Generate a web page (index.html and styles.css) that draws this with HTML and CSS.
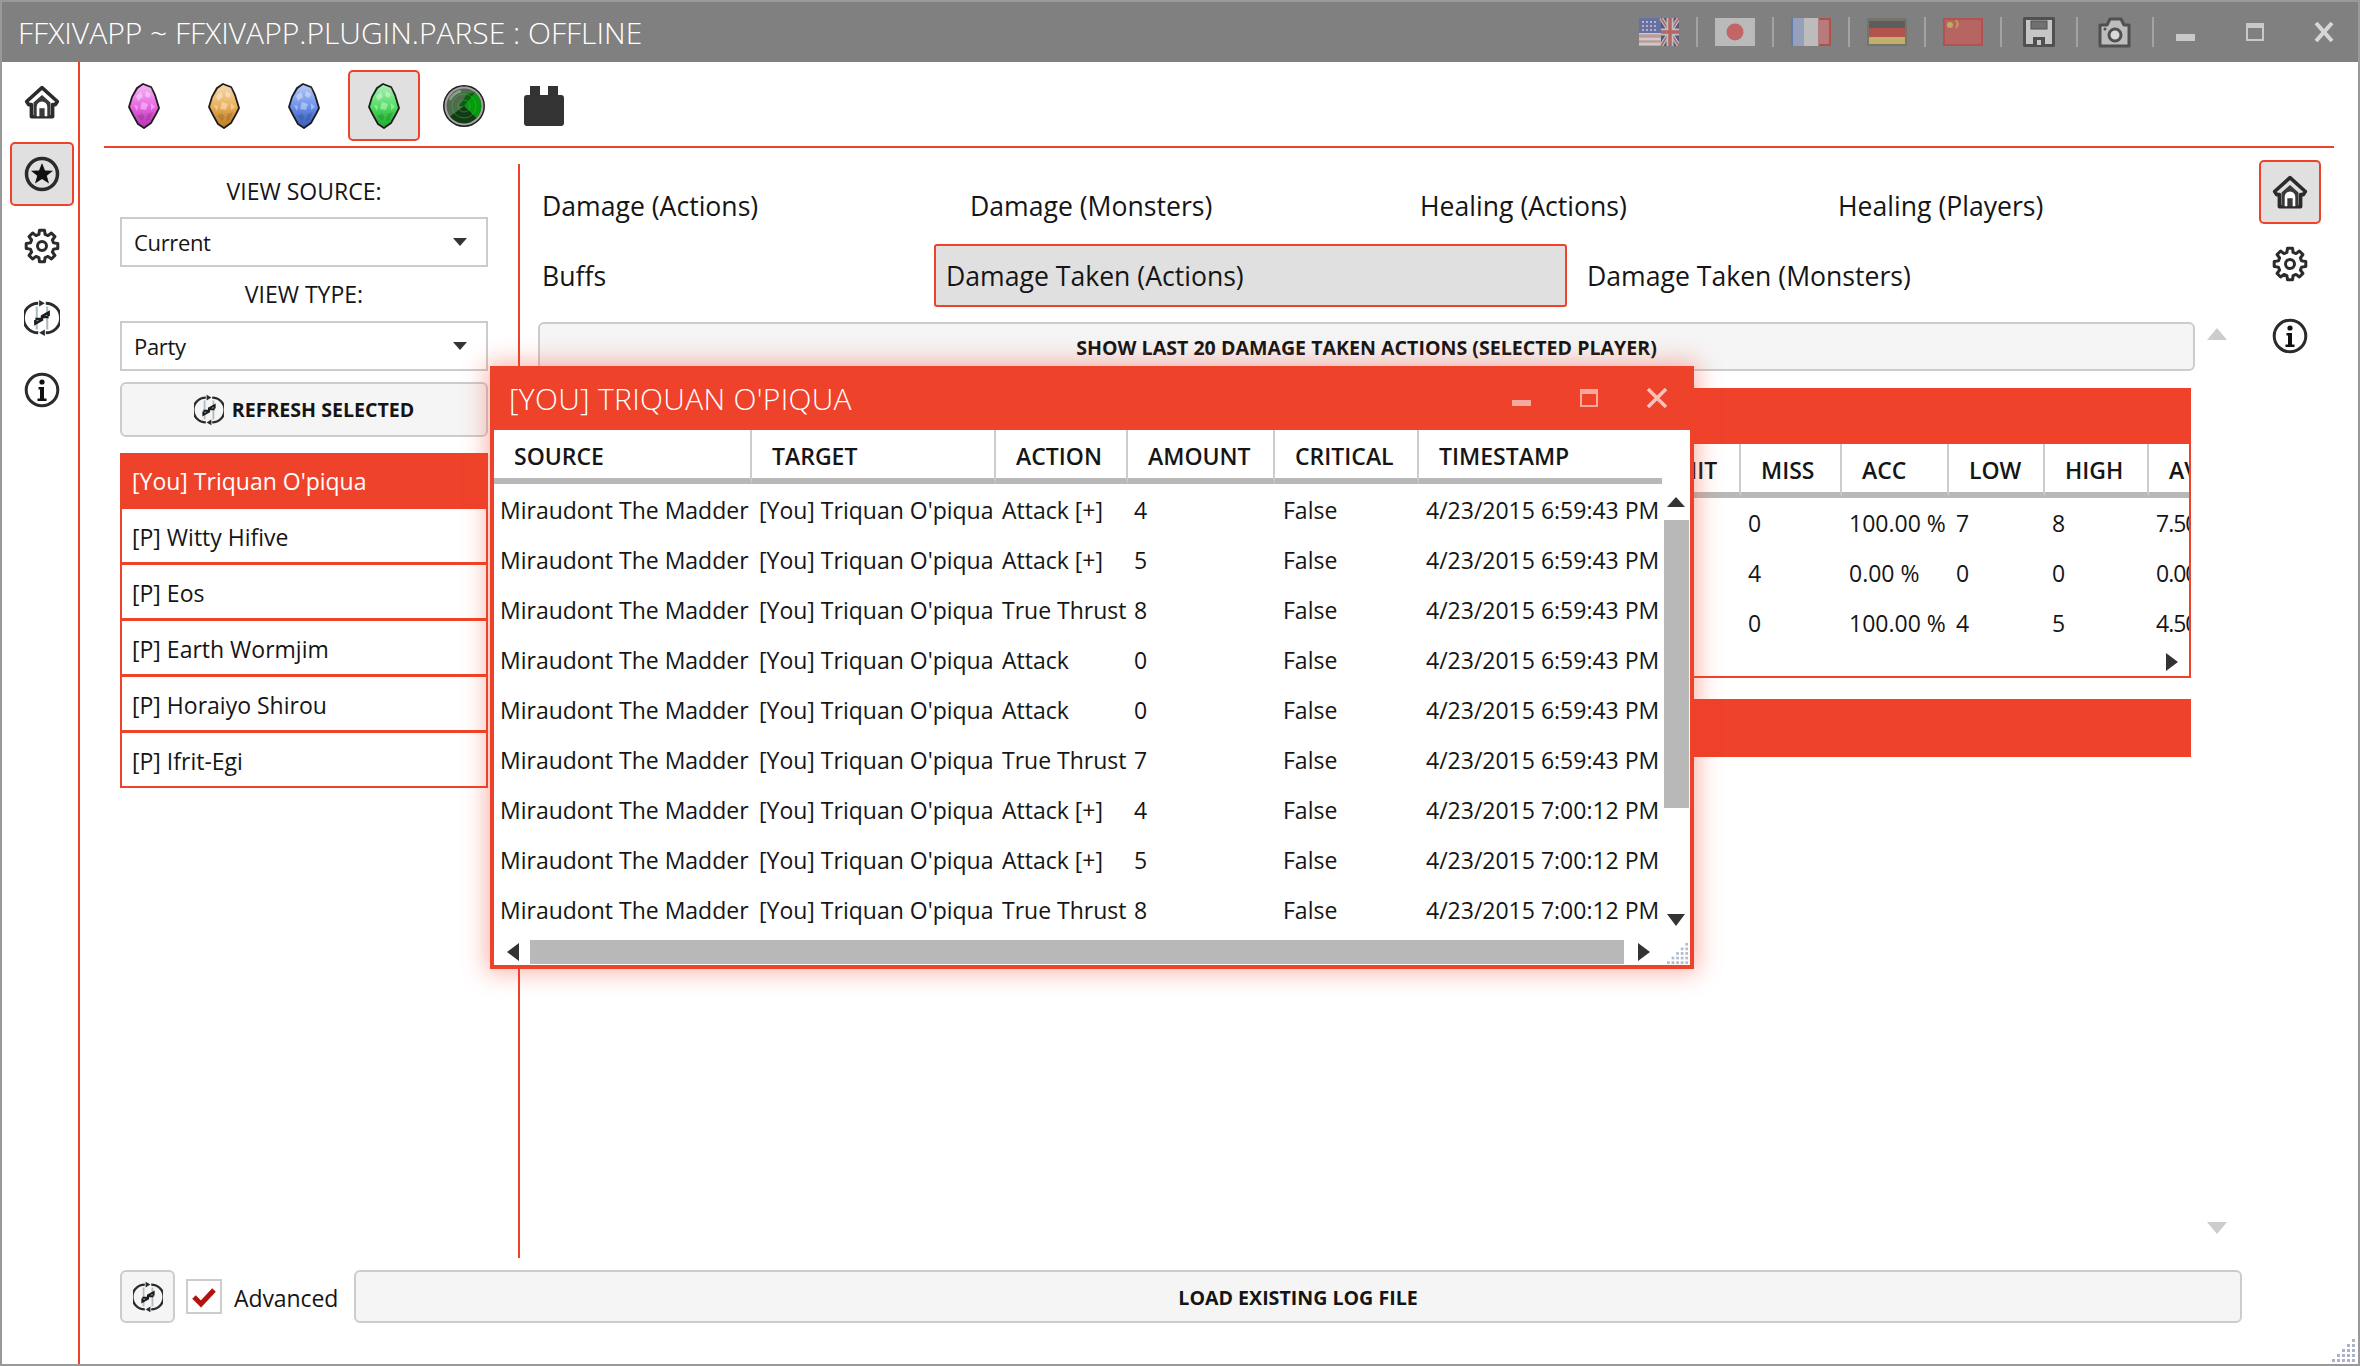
FILE: index.html
```html
<!DOCTYPE html>
<html lang="en">
<head>
<meta charset="utf-8">
<title>FFXIVAPP</title>
<link rel="stylesheet" href="styles.css">
</head>
<body>
<svg class="defs" width="0" height="0" aria-hidden="true">
  <defs>
    <linearGradient id="gem-shade" x1="0" y1="0" x2="0" y2="1">
      <stop offset="0" stop-color="#fff" stop-opacity=".62"/>
      <stop offset=".5" stop-color="#fff" stop-opacity=".22"/>
      <stop offset="1" stop-color="#000" stop-opacity=".16"/>
    </linearGradient>
    <symbol id="i-home" viewBox="0 0 34 33">
      <path d="M17 3 L2.500 16 L4.500 19 H7 V30.500 H27 V19 H29.500 L31.500 16 Z" fill="none" stroke="#2b2b2b" stroke-width="3.400" stroke-linejoin="round"/>
      <path d="M9 17 L17 10 L25 17 V30 H9 Z" fill="#3a3a3a"/>
      <path d="M12 30 V21 A5 5 0 0 1 22 21 V30 H19.500 V22.500 H14.500 V30 Z" fill="#fff"/>
    </symbol>
    <symbol id="i-star" viewBox="-18 -18 36 36">
      <circle r="15.500" fill="none" stroke="#2b2b2b" stroke-width="3.500"/>
      <path d="M0 -11 L3 -3.500 L11 -3.200 L4.800 1.800 L7 9.500 L0 5.100 L-7 9.500 L-4.800 1.800 L-11 -3.200 L-3 -3.500 Z" fill="#111"/>
    </symbol>
    <symbol id="i-gear" viewBox="-18 -18 36 36">
      <path d="M11.590 -3.110 L15.800 -2.500 L15.800 2.500 L11.590 3.110 L10.390 6 L12.940 9.400 L9.400 12.940 L6 10.390 L3.110 11.590 L2.500 15.800 L-2.500 15.800 L-3.110 11.590 L-6 10.390 L-9.400 12.940 L-12.940 9.400 L-10.390 6 L-11.590 3.110 L-15.800 2.500 L-15.800 -2.500 L-11.590 -3.110 L-10.390 -6 L-12.940 -9.400 L-9.400 -12.940 L-6 -10.390 L-3.110 -11.590 L-2.500 -15.800 L2.500 -15.800 L3.110 -11.590 L6 -10.390 L9.400 -12.940 L12.940 -9.400 L10.390 -6 Z" fill="none" stroke="#2b2b2b" stroke-width="3" stroke-linejoin="round"/>
      <circle r="4.500" fill="none" stroke="#2b2b2b" stroke-width="3"/>
    </symbol>
    <symbol id="i-refresh" viewBox="-18 -20 36 40">
      <path d="M-4 -15.500 A15.500 15.500 0 0 0 -4 15.500 M4 -15.500 A15.500 15.500 0 0 1 4 15.500" fill="none" stroke="#2b2b2b" stroke-width="3"/>
      <path d="M-3 -19 L3 -15.500 L-3 -12 Z M3 19 L-3 15.500 L3 12 Z" fill="#2b2b2b"/>
      <path d="M-5.500 -12 V12 M5.500 -12 V12" stroke="#a9bcc4" stroke-width="2.200"/>
      <path d="M-7 1 H0 V-2 L7 -6 V-2 M7 -1 H0 V2 L-7 6 V2" fill="none" stroke="#1c1c1c" stroke-width="2.600"/>
    </symbol>
    <symbol id="i-info" viewBox="-18 -18 36 36">
      <circle r="15.800" fill="none" stroke="#2b2b2b" stroke-width="3"/>
      <circle cy="-8" r="2.600" fill="#111"/>
      <path d="M-3.500 -3 H2 V8.500 H4.500 V11 H-4.500 V8.500 H-2 V-.500 H-3.500 Z" fill="#111"/>
    </symbol>
    <symbol id="i-gem" viewBox="0 0 32 46">
      <path d="M15 1 L23 4 L27 12 L31 25 L28 31 L23 40 L16 45 L10 41 L5 32 L1 24 L4 14 L9 5 Z" fill="currentColor" stroke="#1c1c1c" stroke-width="1.800" stroke-linejoin="round"/>
      <path d="M15 2 L23 5 L26 12 L30 25 L27 31 L22 40 L16 44 L11 41 L6 32 L2 24 L5 14 L10 6 Z" fill="url(#gem-shade)"/>
      <path d="M8 13 L13 9 L15 14 L10 18 Z M18 8 L23 11 L21 15 L17 13 Z M14 19 L20 21 L18 27 L12 26 Z M23 20 L27 24 L23 27 Z M6 22 L10 23 L9 28 Z" fill="#fff" opacity=".38"/>
      <path d="M9 33 L14 30 L17 34 L14 38 Z M19 31 L25 29 L22 37 L18 38 Z" fill="#000" opacity=".12"/>
    </symbol>
  </defs>
</svg>

<div class="window">
  <header class="titlebar">
    <h1 class="app-title">FFXIVAPP ~ FFXIVAPP.PLUGIN.PARSE : OFFLINE</h1>
    <div class="title-tools">
      <svg class="flag" viewBox="0 0 40 28"><rect width="22" height="28" fill="#d9a5a5"/><path d="M0 3h22M0 9h22M0 15h22M0 21h22M0 26h22" stroke="#efe9e9" stroke-width="2.500"/><rect width="22" height="15" fill="#5d6cb0"/><path d="M3 4h16M3 8h16M3 12h16" stroke="#c6cce6" stroke-width="2" stroke-dasharray="2 2"/><rect x="22" width="18" height="28" fill="#3f4a7c"/><path d="M22 0L40 28M40 0L22 28" stroke="#d9d9d9" stroke-width="4"/><path d="M22 0L40 28M40 0L22 28" stroke="#c25a5a" stroke-width="1.500"/><path d="M31 0v28M22 14h18" stroke="#d9d9d9" stroke-width="7"/><path d="M31 0v28M22 14h18" stroke="#cc5b5b" stroke-width="3.500"/></svg>
      <i class="sep"></i>
      <svg class="flag" viewBox="0 0 40 28"><rect width="40" height="28" fill="#d3d3d3"/><circle cx="20" cy="14" r="8.500" fill="#de5a5a"/></svg>
      <i class="sep"></i>
      <svg class="flag" viewBox="0 0 40 28"><rect width="40" height="28" fill="#d6d6d6"/><rect width="13" height="28" fill="#9fb0d0"/><rect x="27" width="13" height="28" fill="#cf7b78"/><rect width="2" height="28" fill="#5b78bd"/><path d="M28 1h11v26H28" fill="none" stroke="#c73c38" stroke-width="2"/></svg>
      <i class="sep"></i>
      <svg class="flag" viewBox="0 0 40 28"><rect width="40" height="28" fill="#6f6f5e"/><rect x="2" y="3" width="36" height="8" fill="#4f4f4f"/><rect x="2" y="10" width="36" height="9" fill="#c9403a"/><rect x="2" y="19" width="36" height="7" fill="#ddc564"/></svg>
      <i class="sep"></i>
      <svg class="flag" viewBox="0 0 40 28"><rect width="40" height="28" fill="#c63f3c"/><rect x="2" y="2" width="36" height="24" fill="#cf5a56"/><circle cx="7" cy="7" r="3" fill="#d8bf55"/><path d="M13 2l2 4-2 4" fill="none" stroke="#d6a44f" stroke-width="2"/></svg>
      <i class="sep"></i>
      <svg class="tool-floppy" viewBox="0 0 32 30"><path d="M1.500 1.500H30.500V28.500H1.500Z" fill="#c6c6c6" stroke="#505050" stroke-width="3" stroke-linejoin="round"/><rect x="8" y="4" width="16" height="8" fill="#707070" stroke="#505050"/><rect x="10" y="20" width="12" height="9" fill="#505050"/><rect x="14" y="23" width="4" height="5" fill="#c6c6c6"/></svg>
      <i class="sep"></i>
      <svg class="tool-camera" viewBox="0 0 35 31"><path d="M3 8H10L13 2H24L27 8H32V29H3Z" fill="#bdbdbd" stroke="#505050" stroke-width="3" stroke-linejoin="round"/><circle cx="18" cy="18" r="6" fill="#d8d8d8" stroke="#505050" stroke-width="3"/><circle cx="8" cy="12" r="1.500" fill="#505050"/></svg>
      <i class="sep"></i>
      <div class="win-controls">
        <span class="win-btn win-min"><svg width="19" height="7"><rect width="19" height="7" fill="#c9c9c9"/></svg></span>
        <span class="win-btn"><svg width="18" height="18"><rect x="1" y="1" width="16" height="16" fill="none" stroke="#c9c9c9" stroke-width="2"/><rect width="18" height="5" fill="#c9c9c9"/></svg></span>
        <span class="win-btn"><svg width="20" height="20"><path d="M2 1L18 19M18 1L2 19" stroke="#d6d6d6" stroke-width="4"/></svg></span>
      </div>
    </div>
  </header>

  <div class="main">
    <nav class="rail">
      <span class="rail-slot"><svg class="nav-icon"><use href="#i-home"/></svg></span>
      <span class="rail-slot"><span class="icon-btn active"><svg class="nav-icon"><use href="#i-star"/></svg></span></span>
      <span class="rail-slot"><svg class="nav-icon"><use href="#i-gear"/></svg></span>
      <span class="rail-slot"><svg class="nav-icon"><use href="#i-refresh"/></svg></span>
      <span class="rail-slot"><svg class="nav-icon"><use href="#i-info"/></svg></span>
    </nav>

    <div class="content">
      <div class="toolbar">
        <span class="tool-slot"><svg class="gem gem-pink"><use href="#i-gem"/></svg></span>
        <span class="tool-slot"><svg class="gem gem-orange"><use href="#i-gem"/></svg></span>
        <span class="tool-slot"><svg class="gem gem-blue"><use href="#i-gem"/></svg></span>
        <span class="tool-slot active"><svg class="gem gem-green"><use href="#i-gem"/></svg></span>
        <span class="tool-slot">
          <svg class="radar" viewBox="0 0 44 46">
            <circle cx="22" cy="23" r="21" fill="#1e1e1e"/>
            <circle cx="22" cy="23" r="19.500" fill="#a5a5a5"/>
            <circle cx="22" cy="23" r="17.500" fill="#52684f"/>
            <path d="M22 23L33 9.500A17.500 17.500 0 0 1 34.500 35Z" fill="#079a0d"/>
            <path d="M22 23L34.500 35A17.500 17.500 0 0 1 8 33.500Z" fill="#123a14"/>
            <path d="M22 23L33 9.500 25 11 17 23Z" fill="#0a5f10"/>
            <circle cx="22" cy="23" r="12" fill="none" stroke="#2fc838" stroke-width=".8" opacity=".6"/>
            <circle cx="22" cy="23" r="6" fill="none" stroke="#2fc838" stroke-width=".8" opacity=".6"/>
            <path d="M8 17A16 16 0 0 1 19 8" stroke="#8c9c8c" stroke-width="2.500" fill="none"/>
          </svg>
        </span>
        <span class="tool-slot">
          <svg class="plugin" viewBox="0 0 40 40"><rect x="6" y="0" width="10" height="15" fill="#333"/><rect x="24" y="0" width="10" height="15" fill="#333"/><rect y="9" width="40" height="31" rx="3" fill="#333"/></svg>
        </span>
      </div>

      <div class="panels">
        <aside class="left">
          <div class="field-label">VIEW SOURCE:</div>
          <div class="combo"><span>Current</span><i class="combo-arrow"></i></div>
          <div class="field-label field-label-2">VIEW TYPE:</div>
          <div class="combo"><span>Party</span><i class="combo-arrow"></i></div>
          <div class="btn btn-refresh"><svg class="btn-icon"><use href="#i-refresh"/></svg><span>REFRESH SELECTED</span></div>
          <ul class="players">
            <li class="selected">[You] Triquan O'piqua</li>
            <li>[P] Witty Hifive</li>
            <li>[P] Eos</li>
            <li>[P] Earth Wormjim</li>
            <li>[P] Horaiyo Shirou</li>
            <li>[P] Ifrit-Egi</li>
          </ul>
        </aside>

        <section class="center">
          <div class="tabs tabs-1">
            <span class="tab">Damage (Actions)</span>
            <span class="tab">Damage (Monsters)</span>
            <span class="tab">Healing (Actions)</span>
            <span class="tab">Healing (Players)</span>
          </div>
          <div class="tabs tabs-2">
            <span class="tab">Buffs</span>
            <span class="tab selected">Damage Taken (Actions)</span>
            <span class="tab tab-last">Damage Taken (Monsters)</span>
          </div>
          <div class="scroll-row">
            <div class="scroll-main">
              <div class="btn btn-wide">SHOW LAST 20 DAMAGE TAKEN ACTIONS (SELECTED PLAYER)</div>
              <div class="panel-head"></div>
              <div class="panel-body">
                <table class="grid stats">
                  <colgroup><col class="sc-name"><col class="sc-hit"><col class="sc-miss"><col class="sc-acc"><col class="sc-low"><col class="sc-high"><col class="sc-avg"></colgroup>
                  <thead><tr><th></th><th class="th-hit">HIT</th><th>MISS</th><th>ACC</th><th>LOW</th><th>HIGH</th><th>AVG</th></tr></thead>
                  <tbody>
                    <tr><td></td><td></td><td>0</td><td>100.00 %</td><td>7</td><td>8</td><td>7.50</td></tr>
                    <tr><td></td><td></td><td>4</td><td>0.00 %</td><td>0</td><td>0</td><td>0.00</td></tr>
                    <tr><td></td><td></td><td>0</td><td>100.00 %</td><td>4</td><td>5</td><td>4.50</td></tr>
                  </tbody>
                </table>
                <div class="stats-scroll"><i class="arrow arrow-right"></i></div>
              </div>
              <div class="panel-head panel-head-2"></div>
            </div>
            <div class="page-scroll">
              <i class="page-arrow page-arrow-up"></i>
              <i class="page-arrow page-arrow-down"></i>
            </div>
          </div>
        </section>

        <aside class="side">
          <span class="side-slot"><span class="icon-btn active side-active"><svg class="side-icon"><use href="#i-home"/></svg></span></span>
          <span class="side-slot"><svg class="side-icon"><use href="#i-gear"/></svg></span>
          <span class="side-slot"><svg class="side-icon"><use href="#i-info"/></svg></span>
        </aside>
      </div>

      <footer class="bottom">
        <div class="btn btn-square"><svg class="btn-icon"><use href="#i-refresh"/></svg></div>
        <span class="check"><svg width="26" height="22" viewBox="0 0 26 22"><path d="M3 11L10 18L23 4" fill="none" stroke="#b3130e" stroke-width="5"/></svg></span>
        <span class="check-label">Advanced</span>
        <div class="btn btn-load">LOAD EXISTING LOG FILE</div>
      </footer>
    </div>
  </div>

  <svg class="grip grip-window" width="24" height="24" viewBox="0 0 24 24"><g fill="#a9b4cc"><rect x="20" y="1" width="3" height="3"/><rect x="15" y="6" width="3" height="3"/><rect x="20" y="6" width="3" height="3"/><rect x="10" y="11" width="3" height="3"/><rect x="15" y="11" width="3" height="3"/><rect x="20" y="11" width="3" height="3"/><rect x="5" y="16" width="3" height="3"/><rect x="10" y="16" width="3" height="3"/><rect x="15" y="16" width="3" height="3"/><rect x="20" y="16" width="3" height="3"/><rect x="0" y="21" width="3" height="3"/><rect x="5" y="21" width="3" height="3"/><rect x="10" y="21" width="3" height="3"/><rect x="15" y="21" width="3" height="3"/><rect x="20" y="21" width="3" height="3"/></g></svg>

  <div class="popup">
    <div class="popup-title">
      <span class="popup-name">[YOU] TRIQUAN O'PIQUA</span>
      <div class="popup-controls">
        <span class="pop-btn pop-min"><svg width="19" height="6"><rect width="19" height="6" fill="#f7a99e"/></svg></span>
        <span class="pop-btn"><svg width="18" height="18"><rect x="1" y="1" width="16" height="16" fill="none" stroke="#f7a99e" stroke-width="2"/><rect width="18" height="5" fill="#f7a99e"/></svg></span>
        <span class="pop-btn"><svg width="22" height="20"><path d="M2 1L20 19M20 1L2 19" stroke="#f9c3bb" stroke-width="3.500"/></svg></span>
      </div>
    </div>
    <div class="popup-body">
      <table class="grid log">
        <colgroup><col class="lc-source"><col class="lc-target"><col class="lc-action"><col class="lc-amount"><col class="lc-critical"><col class="lc-time"></colgroup>
        <thead><tr><th>SOURCE</th><th>TARGET</th><th>ACTION</th><th>AMOUNT</th><th>CRITICAL</th><th>TIMESTAMP</th></tr></thead>
        <tbody>
          <tr><td>Miraudont The Madder</td><td>[You] Triquan O'piqua</td><td>Attack [+]</td><td>4</td><td>False</td><td>4/23/2015 6:59:43 PM</td></tr>
          <tr><td>Miraudont The Madder</td><td>[You] Triquan O'piqua</td><td>Attack [+]</td><td>5</td><td>False</td><td>4/23/2015 6:59:43 PM</td></tr>
          <tr><td>Miraudont The Madder</td><td>[You] Triquan O'piqua</td><td>True Thrust</td><td>8</td><td>False</td><td>4/23/2015 6:59:43 PM</td></tr>
          <tr><td>Miraudont The Madder</td><td>[You] Triquan O'piqua</td><td>Attack</td><td>0</td><td>False</td><td>4/23/2015 6:59:43 PM</td></tr>
          <tr><td>Miraudont The Madder</td><td>[You] Triquan O'piqua</td><td>Attack</td><td>0</td><td>False</td><td>4/23/2015 6:59:43 PM</td></tr>
          <tr><td>Miraudont The Madder</td><td>[You] Triquan O'piqua</td><td>True Thrust</td><td>7</td><td>False</td><td>4/23/2015 6:59:43 PM</td></tr>
          <tr><td>Miraudont The Madder</td><td>[You] Triquan O'piqua</td><td>Attack [+]</td><td>4</td><td>False</td><td>4/23/2015 7:00:12 PM</td></tr>
          <tr><td>Miraudont The Madder</td><td>[You] Triquan O'piqua</td><td>Attack [+]</td><td>5</td><td>False</td><td>4/23/2015 7:00:12 PM</td></tr>
          <tr><td>Miraudont The Madder</td><td>[You] Triquan O'piqua</td><td>True Thrust</td><td>8</td><td>False</td><td>4/23/2015 7:00:12 PM</td></tr>
        </tbody>
      </table>
      <div class="vscroll">
        <i class="arrow arrow-up"></i>
        <div class="vthumb"></div>
        <i class="arrow arrow-down"></i>
      </div>
    </div>
    <div class="hscroll">
      <i class="arrow arrow-left"></i>
      <div class="hthumb"></div>
      <i class="arrow arrow-right"></i>
    </div>
    <svg class="grip grip-popup" width="22" height="22" viewBox="0 0 24 24"><g fill="#b4bccf"><rect x="20" y="1" width="3" height="3"/><rect x="15" y="6" width="3" height="3"/><rect x="20" y="6" width="3" height="3"/><rect x="10" y="11" width="3" height="3"/><rect x="15" y="11" width="3" height="3"/><rect x="20" y="11" width="3" height="3"/><rect x="5" y="16" width="3" height="3"/><rect x="10" y="16" width="3" height="3"/><rect x="15" y="16" width="3" height="3"/><rect x="20" y="16" width="3" height="3"/><rect x="0" y="21" width="3" height="3"/><rect x="5" y="21" width="3" height="3"/><rect x="10" y="21" width="3" height="3"/><rect x="15" y="21" width="3" height="3"/><rect x="20" y="21" width="3" height="3"/></g></svg>
  </div>
</div>
</body>
</html>
```

FILE: styles.css
```css
* { box-sizing: border-box; }
html, body { margin: 0; padding: 0; background: #fff; }
body { font-family: "Open Sans", "Noto Sans", sans-serif; color: #151515; font-size: 23px; }
.defs { position: absolute; }
i { display: block; }

.window {
  position: relative;
  width: 2360px;
  height: 1366px;
  display: flex;
  flex-direction: column;
  border: 2px solid #999;
  overflow: hidden;
  background: #fff;
}

/* title bar */
.titlebar {
  flex: none;
  height: 60px;
  margin: 0 -2px;
  padding-left: 18px;
  background: #808080;
  display: flex;
  align-items: center;
  justify-content: space-between;
}
.app-title { margin: 0; font-weight: 300; font-size: 30px; color: #fff; white-space: nowrap; }
.title-tools { display: flex; align-items: center; gap: 17px; }
.flag { width: 40px; height: 28px; display: block; opacity: .7; }
.sep { width: 2px; height: 30px; background: #a3a3a3; }
.tool-floppy { width: 32px; height: 30px; margin: 0 4px; }
.tool-camera { width: 35px; height: 31px; margin: 0 3px 0 2px; }
.win-controls { display: flex; margin-left: -17px; margin-right: 2px; }
.win-btn { width: 69px; height: 44px; display: flex; align-items: center; justify-content: center; }
.win-min { width: 66px; padding: 10px 4px 0 0; }

/* layout */
.main { flex: 1; display: flex; min-height: 0; }
.rail {
  flex: none;
  width: 78px;
  padding: 4px 0 0 4px;
  border-right: 2px solid #ef422a;
  display: flex;
  flex-direction: column;
  align-items: center;
}
.rail-slot { width: 64px; height: 72px; display: flex; align-items: center; justify-content: center; }
.nav-icon { width: 36px; height: 38px; display: block; }
.icon-btn { display: flex; align-items: center; justify-content: center; width: 64px; height: 64px; border-radius: 5px; }
.icon-btn.active { background: #e0e0e0; border: 2px solid #ef422a; }

.content { flex: 1; min-width: 0; display: flex; flex-direction: column; }
.toolbar {
  flex: none;
  height: 86px;
  margin: 0 24px;
  padding: 8px 0 4px 4px;
  border-bottom: 2px solid #ef422a;
  display: flex;
  gap: 8px;
}
.tool-slot { width: 72px; height: 71px; display: flex; align-items: center; justify-content: center; border-radius: 5px; }
.tool-slot.active { background: #e0e0e0; border: 2px solid #ef422a; }
.gem { width: 32px; height: 46px; display: block; }
.gem-pink { color: #e23fdc; }
.gem-orange { color: #e59a2e; }
.gem-blue { color: #4474e4; }
.gem-green { color: #25d43a; }
.radar { width: 44px; height: 46px; display: block; }
.plugin { width: 40px; height: 40px; display: block; }

.panels { flex: 1; display: flex; min-height: 0; padding-left: 40px; }

/* left column */
.left { flex: none; width: 368px; margin: 16px 30px 0 0; }
.field-label { height: 53px; padding-top: 13px; line-height: 28px; text-align: center; font-size: 23px; }
.field-label-2 { height: 54px; }
.combo {
  height: 50px;
  padding: 0 19px 0 12px;
  border: 2px solid #ccc;
  display: flex;
  align-items: center;
  justify-content: space-between;
  font-size: 22px;
  letter-spacing: -.35px;
}
.combo-arrow { width: 0; height: 0; border-left: 7px solid transparent; border-right: 7px solid transparent; border-top: 8px solid #333; }
.btn {
  background: #f5f5f5;
  border: 2px solid #ccc;
  border-radius: 6px;
  display: flex;
  align-items: center;
  justify-content: center;
  font-weight: 700;
  font-size: 19.600px;
}
.btn-refresh { height: 55px; margin-top: 11px; gap: 8px; }
.btn-icon { width: 30px; height: 32px; display: block; }
.players { list-style: none; margin: 16px 0 0; padding: 0; border: 2px solid #ef422a; border-top: 0; }
.players li { height: 56px; line-height: 57px; padding-left: 10px; border-bottom: 3px solid #ef422a; font-size: 23px; }
.players li:last-child { height: 53px; border-bottom: 0; }
.players li.selected { background: #ef422a; color: #fff; }

/* center */
.center { flex: 1; min-width: 0; margin-top: 16px; padding-left: 10px; border-left: 2px solid #ef422a; display: flex; flex-direction: column; }
.tabs { display: grid; flex: none; font-size: 26.600px; }
.tabs-1 { height: 80px; padding-top: 4px; align-items: center; grid-template-columns: 428px 450px 418px auto; }
.tabs-2 { height: 78px; align-items: start; grid-template-columns: 404px 633px auto; }
.tab { padding-left: 12px; white-space: nowrap; }
.tabs-2 .tab { height: 63px; line-height: 60px; padding-left: 10px; border: 2px solid transparent; }
.tabs-2 .tab.selected { background: #e0e0e0; border-color: #ef422a; border-radius: 3px; }
.tabs-2 .tab-last { padding-left: 18px; }
.scroll-row { flex: 1; min-height: 0; display: flex; padding-left: 8px; }
.scroll-main { flex: none; width: 1657px; }
.btn-wide { height: 49px; padding-top: 2px; }
.panel-head { height: 56px; width: 1653px; margin-top: 17px; background: #ef422a; }
.panel-head-2 { height: 58px; margin-top: 21px; }
.panel-body { width: 1653px; height: 234px; border: 2px solid #ef422a; border-top: 0; overflow: hidden; }
.page-scroll { flex: none; width: 20px; margin: 6px 0 24px 12px; display: flex; flex-direction: column; justify-content: space-between; }
.page-arrow { width: 0; height: 0; border-left: 10px solid transparent; border-right: 10px solid transparent; }
.page-arrow-up { border-bottom: 12px solid #ccc; }
.page-arrow-down { border-top: 12px solid #ccc; }

/* grids */
.grid { border-collapse: separate; border-spacing: 0; table-layout: fixed; }
.grid th { height: 54px; padding: 3px 0 0 20px; border-bottom: 6px solid #b8b8b8; border-right: 2px solid #ccc; text-align: left; font-weight: 600; font-size: 23px; white-space: nowrap; overflow: hidden; }
.grid th:last-child { border-right: 0; }
.grid td { height: 50px; padding: 0 0 0 7px; font-size: 23px; white-space: nowrap; overflow: hidden; }
.stats { width: 1725px; }
.stats .th-hit { padding-left: 15px; }
.stats td:last-child { letter-spacing: -1px; }
.sc-name { width: 1125px; } .sc-hit { width: 76px; } .sc-miss { width: 101px; } .sc-acc { width: 107px; } .sc-low { width: 96px; } .sc-high { width: 104px; } .sc-avg { width: 116px; }
.stats-scroll { display: flex; justify-content: flex-end; padding: 5px 11px 0 0; }

/* popup */
.popup {
  position: absolute;
  left: 488px;
  top: 364px;
  width: 1204px;
  height: 603px;
  display: flex;
  flex-direction: column;
  border: 4px solid #ef422a;
  border-top: 0;
  background: #fff;
  box-shadow: 0 0 22px 4px rgba(239, 66, 42, .38);
}
.popup-title { flex: none; height: 64px; margin: 0 -4px; padding-left: 19px; background: #ef422a; color: #fff; display: flex; align-items: center; justify-content: space-between; }
.popup-name { font-weight: 300; font-size: 30px; letter-spacing: .3px; white-space: nowrap; }
.popup-controls { display: flex; padding-right: 3px; }
.pop-btn { width: 68px; height: 40px; display: flex; align-items: center; justify-content: center; }
.pop-min { padding-top: 10px; }
.popup-body { flex: 1; min-height: 0; display: flex; }
.log { width: 1168px; flex: none; align-self: flex-start; }
.lc-source { width: 258px; } .lc-target { width: 244px; } .lc-action { width: 132px; } .lc-amount { width: 147px; } .lc-critical { width: 144px; } .lc-time { width: 243px; }
.log tbody tr:first-child td { height: 51px; padding-top: 1px; }
.log td:nth-child(5) { padding-left: 8px; }
.log td:nth-child(1), .log td:nth-child(3), .log td:nth-child(4) { padding-left: 6px; }
.vscroll { flex: none; width: 28px; padding-top: 67px; display: flex; flex-direction: column; align-items: center; }
.vthumb { width: 25px; height: 288px; margin-top: 13px; background: #b8b8b8; }
.arrow { width: 0; height: 0; }
.arrow-up { border-left: 9px solid transparent; border-right: 9px solid transparent; border-bottom: 10px solid #333; }
.arrow-down { margin-top: 106px; border-left: 9px solid transparent; border-right: 9px solid transparent; border-top: 12px solid #333; }
.arrow-left { border-top: 9px solid transparent; border-bottom: 9px solid transparent; border-right: 12px solid #333; }
.arrow-right { border-top: 9px solid transparent; border-bottom: 9px solid transparent; border-left: 12px solid #333; }
.hscroll { flex: none; height: 30px; display: flex; align-items: center; padding: 4px 0 0 13px; }
.hthumb { width: 1094px; height: 24px; margin: 0 14px 0 11px; background: #b8b8b8; }
.grip { position: absolute; display: block; }
.grip-window { right: 2px; bottom: 2px; }
.grip-popup { right: 1px; bottom: 1px; }

/* side rail */
.side { flex: none; width: 62px; margin: 8px 37px 0 33px; display: flex; flex-direction: column; }
.side-slot { height: 72px; display: flex; align-items: center; justify-content: center; }
.side-icon { width: 36px; height: 38px; display: block; }
.side-active { width: 62px; }

/* bottom bar */
.bottom { flex: none; height: 106px; padding: 12px 116px 41px 40px; display: flex; align-items: center; }
.btn-square { flex: none; width: 55px; height: 53px; }
.check { flex: none; width: 36px; height: 35px; margin-left: 11px; border: 2px solid #ccc; display: flex; align-items: center; justify-content: center; }
.check-label { flex: none; width: 132px; padding: 2px 0 0 12px; font-size: 23px; letter-spacing: -.1px; }
.btn-load { flex: 1; height: 53px; padding-top: 2px; }
```
